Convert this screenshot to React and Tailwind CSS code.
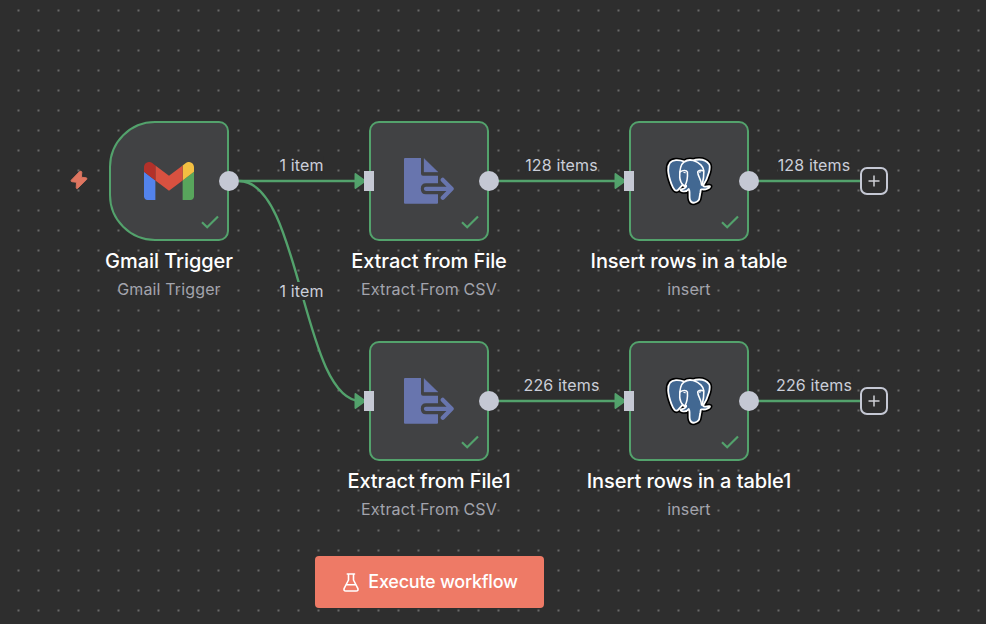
const GREEN = "#53a26c";

function DotGrid() {
  return (
    <svg className="absolute inset-0 h-full w-full">
      <defs>
        <pattern id="dots" x="8.5" y="0.5" width="20" height="20" patternUnits="userSpaceOnUse">
          <circle cx="10" cy="10" r="0.95" fill="#818181" />
        </pattern>
      </defs>
      <rect width="100%" height="100%" fill="url(#dots)" />
    </svg>
  );
}

const edges = [
  "M239 181H357",
  "M239 181C301.5 181 301.5 401 361 401",
  "M489 181H617",
  "M489 401H617",
  "M749 181H861",
  "M749 401H861",
];
const arrows = [
  [355, 181],
  [355, 401],
  [615, 181],
  [615, 401],
];

function Edges() {
  return (
    <svg className="absolute inset-0 h-full w-full" fill="none">
      {edges.map((d) => (
        <path key={d} d={d} stroke={GREEN} strokeWidth="2.4" />
      ))}
      {arrows.map(([x, y]) => (
        <path
          key={`${x}-${y}`}
          d={`M${x + 0.4} ${y - 7}L${x + 10} ${y}L${x + 0.4} ${y + 7}Z`}
          fill={GREEN}
          stroke={GREEN}
          strokeWidth="1.8"
          strokeLinejoin="round"
        />
      ))}
    </svg>
  );
}

function GmailIcon() {
  return (
    <svg viewBox="52 42 88 66" className="h-[38px] w-[50px]" preserveAspectRatio="none">
      <path fill="#5383ec" d="M58 108h14V74L52 59v43c0 3.32 2.69 6 6 6" />
      <path fill="#58a55c" d="M120 108h14c3.32 0 6-2.69 6-6V59l-20 15" />
      <path fill="#f3bf42" d="M120 48v26l20-15v-8c0-7.42-8.47-11.65-14.4-7.2" />
      <path fill="#d85140" d="M72 74V48l24 18 24-18v26L96 92" />
      <path fill="#b3312a" d="M52 51v8l20 15V48l-5.6-4.2c-5.94-4.45-14.4-.22-14.4 7.2" />
    </svg>
  );
}

function FileExportIcon() {
  return (
    <svg viewBox="0 0 50 46" className="h-[46px] w-[50px]">
      <path
        fill="#6875ae"
        d="M1 0H17V15.7Q17 17.7 19 17.7H34V25.2H22Q16.8 25.2 16.8 30.7Q16.8 36.2 22 36.2H34V44.7Q34 45.7 33 45.7H1Q0 45.7 0 44.7V1Q0 0 1 0Z"
      />
      <path fill="#6875ae" d="M20 0.4L34 14.1H20Z" stroke="#6875ae" strokeWidth=".3" />
      <path
        d="M22 30.8H46M38.8 21.9L47.6 30.8L38.8 39.8"
        fill="none"
        stroke="#6875ae"
        strokeWidth="4.3"
        strokeLinecap="round"
        strokeLinejoin="round"
      />
    </svg>
  );
}

const ELEPHANT =
  "M115.731 77.44c-13.925 2.873-14.882-1.842-14.882-1.842 14.703-21.816 20.849-49.51 15.545-56.287-14.47-18.489-39.518-9.746-39.936-9.52l-.135.024c-2.751-.571-5.83-.911-9.291-.967-6.301-.103-11.08 1.652-14.707 4.402 0 0-44.684-18.408-42.606 23.151.442 8.842 12.672 66.899 27.26 49.363 5.332-6.412 10.483-11.834 10.483-11.834 2.559 1.699 5.622 2.567 8.833 2.255l.25-.212c-.078.796-.042 1.575.1 2.497-3.758 4.199-2.654 4.936-10.167 6.482-7.602 1.566-3.136 4.355-.22 5.084 3.535.884 11.712 2.136 17.237-5.598l-.221.882c1.473 1.18 2.507 7.672 2.334 13.557-.174 5.885-.29 9.926.871 13.082 1.16 3.156 2.316 10.256 12.192 8.14 8.252-1.768 12.528-6.351 13.124-13.995.422-5.435 1.377-4.631 1.438-9.49l.767-2.3c.884-7.367.14-9.743 5.225-8.638l1.235.108c3.742.17 8.639-.602 11.514-1.938 6.19-2.871 9.861-7.667 3.758-6.408z";

function PostgresIcon() {
  return (
    <svg viewBox="1.500 1 128 128" className="h-[49px] w-[49px] overflow-visible" strokeLinejoin="round" strokeLinecap="round">
      <path d={ELEPHANT} fill="#000" stroke="#000" strokeWidth="13" />
      <path d={ELEPHANT} fill="#426892" stroke="#fff" strokeWidth="4.8" />
      <g fill="none" stroke="#fff" strokeWidth="4">
        <path d="M51.9 13.3C42 21 39 35 40 55C41 66 45 71 50 76" />
        <path d="M76 10C92 15 102 27 103 37C103.500 52 101 64 98.500 74" />
        <path d="M41 40C47 35.500 58 35 60 40C61 52 61 63 53 78" />
        <path d="M101 37C95 35 88 36 87 40C87 52 96 58 97 74" />
        <path d="M51 41.500L54.500 42M91 40.500L94 40" strokeWidth="3" />
      </g>
    </svg>
  );
}

function Check() {
  return (
    <svg viewBox="0 0 20 14" className="absolute right-[7px] bottom-[10px] h-[14px] w-[20px]" fill="none">
      <path d="M2 7.300L7.200 12.200L18 1.500" stroke={GREEN} strokeWidth="2.200" />
    </svg>
  );
}

function Node({ place, title, subtitle, trigger, children }) {
  return (
    <div className={`absolute flex w-60 flex-col items-center ${place}`}>
      <div
        className={`relative flex h-[120px] w-[120px] items-center justify-center border-2 border-[#53a26c] bg-[#414244] ${
          trigger ? "rounded-l-[46px] rounded-r-[10px]" : "rounded-[10px]"
        }`}
      >
        {children}
        <Check />
        {!trigger && <span className="absolute top-12 -left-[7px] h-5 w-[10px] bg-[#c5c8d4]" />}
        <span className="absolute top-12 -right-3 h-5 w-5 rounded-full bg-[#c5c8d4]" />
      </div>
      <div className="mt-[6px] text-[20px] leading-7 font-medium tracking-[-0.07px] whitespace-nowrap text-white">{title}</div>
      <div className="mt-[2px] text-[16px] leading-6 tracking-[0.14px] whitespace-nowrap text-[#a3a4ad]">{subtitle}</div>
    </div>
  );
}

function EdgeLabel({ place, children }) {
  return (
    <span className={`absolute -translate-x-1/2 bg-[#2e2e2e] text-[16px] leading-[18px] tracking-[0.14px] whitespace-nowrap text-[#cbced9] ${place}`}>
      {children}
    </span>
  );
}

function PlusButton({ place }) {
  return (
    <button className={`absolute flex h-7 w-7 items-center justify-center rounded-[7px] border-2 border-[#c5c8d4] bg-[#2e2e2e] ${place}`}>
      <svg viewBox="0 0 12 12" className="h-3 w-3" stroke="#d0d1d6" strokeWidth="1.500">
        <path d="M6 .5V11.500M.5 6H11.500" />
      </svg>
    </button>
  );
}

export default function App() {
  return (
    <main className="relative h-[624px] w-[986px] overflow-hidden bg-[#2e2e2e] font-['Inter',sans-serif]">
      <DotGrid />
      <Edges />

      <svg viewBox="0 0 18 20" className="absolute top-[170px] left-[70px] h-5 w-[18px]">
        <path
          d="M9.600 1.500L1.200 10.200Q.6 11.300 1.900 11.700L6.500 12.300L6.200 17.700Q6.400 19.200 7.700 18.300L16.800 9.300Q17.400 8.100 16.100 7.800L11.400 7.200L11.800 2.200Q11.300 .4 9.600 1.500Z"
          fill="#de7560"
          stroke="#de7560"
          strokeWidth=".9"
          strokeLinejoin="round"
        />
      </svg>

      <Node place="left-[49px] top-[121px]" title="Gmail Trigger" subtitle="Gmail Trigger" trigger>
        <GmailIcon />
      </Node>
      <Node place="left-[309px] top-[121px]" title="Extract from File" subtitle="Extract From CSV">
        <FileExportIcon />
      </Node>
      <Node place="left-[569px] top-[121px]" title="Insert rows in a table" subtitle="insert">
        <PostgresIcon />
      </Node>
      <Node place="left-[309px] top-[341px]" title="Extract from File1" subtitle="Extract From CSV">
        <FileExportIcon />
      </Node>
      <Node place="left-[569px] top-[341px]" title="Insert rows in a table1" subtitle="insert">
        <PostgresIcon />
      </Node>

      <EdgeLabel place="left-[301.5px] top-[156px]">1 item</EdgeLabel>
      <EdgeLabel place="left-[301.5px] top-[282px]">1 item</EdgeLabel>
      <EdgeLabel place="left-[561.5px] top-[156px]">128 items</EdgeLabel>
      <EdgeLabel place="left-[561.5px] top-[376px]">226 items</EdgeLabel>
      <EdgeLabel place="left-[814px] top-[156px]">128 items</EdgeLabel>
      <EdgeLabel place="left-[814px] top-[376px]">226 items</EdgeLabel>

      <PlusButton place="left-[860px] top-[167px]" />
      <PlusButton place="left-[860px] top-[387px]" />

      <button className="absolute top-[556px] left-[315px] flex h-[52px] w-[229px] items-center justify-center gap-[9px] rounded-[4px] bg-[#ee7a66] pb-[2px] pl-[2px] text-[18px] font-medium tracking-[-0.25px] whitespace-nowrap text-white">
        <svg viewBox="0 0 16 19" className="mt-[2px] h-[19px] w-4" fill="none" stroke="#fff" strokeWidth="1.600" strokeLinejoin="round" strokeLinecap="round">
          <path d="M4.300 1H11.500M5.500 1V7L1.200 15.300Q.4 18 2.800 18H13.200Q15.600 18 14.800 15.300L10.500 7V1M3.500 11.800H12.500" />
        </svg>
        Execute workflow
      </button>
    </main>
  );
}
